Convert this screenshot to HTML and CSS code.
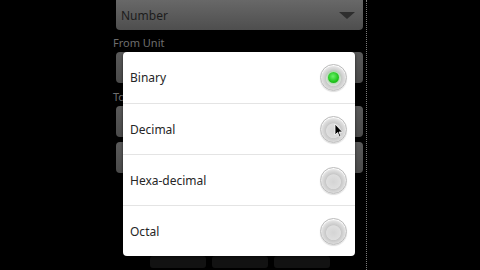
FILE: index.html
```html
<!DOCTYPE html>
<html lang="en">
<head>
    <meta charset="UTF-8">
    <title>Unit Converter</title>
    <link rel="stylesheet" href="styles.css">
</head>
<body>

<div class="screen">
    <div class="spinner">
        <span>Number</span>
        <span class="arrow"></span>
    </div>
    <div class="label">From Unit</div>
    <div class="field"></div>
    <div class="label to-label">To</div>
    <div class="field"></div>
    <div class="field"></div>

    <div class="buttons">
        <div class="btn"></div>
        <div class="btn"></div>
        <div class="btn"></div>
    </div>

    <!-- unit picker -->
    <div class="dialog">
        <div class="option">
            <span>Binary</span>
            <span class="radio checked"></span>
        </div>
        <div class="option">
            <span>Decimal</span>
            <span class="radio"></span>
        </div>
        <div class="option">
            <span>Hexa-decimal</span>
            <span class="radio"></span>
        </div>
        <div class="option">
            <span>Octal</span>
            <span class="radio"></span>
        </div>
    </div>

    <svg class="cursor" width="10" height="15" viewBox="0 0 10 15">
        <path d="M1 1 L1 12 L3.5 9.5 L5.5 14 L7 13.3 L5 9 L8.5 9 Z" fill="#000" stroke="#fff" stroke-width="0.8"/>
    </svg>
</div>

</body>
</html>
```

FILE: styles.css
```css
body {
    margin: 0;
    width: 480px;
    height: 270px;
    background: #000;
    display: flex;
    justify-content: center;
    overflow: hidden;
    font-family: "Noto Sans", "Open Sans", sans-serif;
}
.screen {
    position: relative;
    width: 247px;
    height: 270px;
    padding: 0 3px;
    border-right: 1px dotted #7a7a7a;
    display: flex;
    flex-direction: column;
}
.spinner {
    height: 30px;
    border-radius: 0 0 4px 4px;
    background: linear-gradient(#686868, #4e4e4e);
    display: flex;
    align-items: center;
    justify-content: space-between;
    padding: 0 6px 0 5px;
    font-size: 12px;
    color: #1c1c1c;
}
.arrow {
    width: 0;
    height: 0;
    border-left: 8px solid transparent;
    border-right: 8px solid transparent;
    border-top: 7px solid #2e2e2e;
    margin-right: 2px;
}
.label {
    font-size: 11px;
    color: #6e6e6e;
    margin: 5px 0 0 -3px;
    height: 15px;
    line-height: 15px;
}
.to-label {
    margin-top: 6px;
}
.field {
    height: 31px;
    margin-top: 5px;
    border-radius: 4px;
    background: linear-gradient(#5a5a5a, #4a4a4a);
}
.label + .field {
    margin-top: 2px;
}
.buttons {
    display: flex;
    gap: 6px;
    justify-content: center;
    margin-top: auto;
    padding-bottom: 2px;
}
.btn {
    width: 56px;
    height: 12px;
    border-radius: 3px;
    background: #121212;
}
.dialog {
    position: absolute;
    left: 10px;
    top: 52px;
    width: 232px;
    background: #fff;
    border-radius: 4px;
    box-shadow: 0 1px 3px rgba(0, 0, 0, 0.6);
}
.option {
    height: 50px;
    display: flex;
    align-items: center;
    justify-content: space-between;
    padding: 0 8px 0 7px;
    font-size: 12px;
    color: #262626;
    border-top: 1px solid #e4e4e4;
}
.option:first-child {
    border-top: none;
    height: 51px;
}
.radio {
    width: 25px;
    height: 25px;
    border-radius: 50%;
    border: 1px solid #bcbcbc;
    background: radial-gradient(circle at 50% 55%, #d4d4d4 0, #dedede 38%, #c8c8c8 42%, #e8e8e8 70%, #f6f6f6 100%);
    box-shadow: inset 0 1px 1px #fff, 0 1px 1px #ddd;
    display: flex;
    align-items: center;
    justify-content: center;
}
.radio.checked::after {
    content: "";
    width: 11px;
    height: 11px;
    border-radius: 50%;
    background: radial-gradient(circle at 45% 40%, #6cf26a, #1fc41c 60%, #12a012);
    box-shadow: 0 0 3px #5be05a;
}
.cursor {
    position: absolute;
    left: 221px;
    top: 123px;
}
```
